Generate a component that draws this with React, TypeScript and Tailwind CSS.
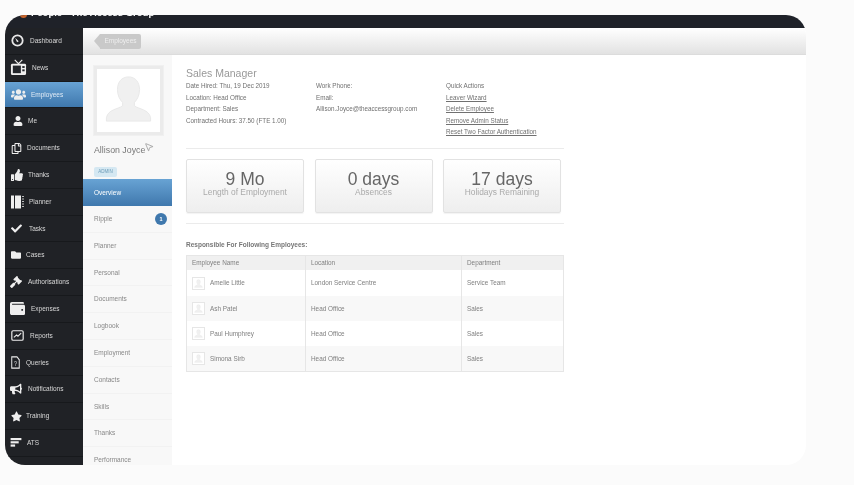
import { MousePointer2 } from "lucide-react";
import {
  FaBullhorn,
  FaCheck,
  FaFolder,
  FaGavel,
  FaRegCopy,
  FaStar,
  FaThumbsUp,
  FaUser,
  FaUsers,
  FaWallet,
} from "react-icons/fa";

function Gauge() {
  return (
    <svg viewBox="0 0 16 16" className="h-[13px] w-[13px]">
      <circle cx="8" cy="8" r="6.4" fill="none" stroke="#e8e8e8" strokeWidth="2.2" />
      <path d="M5 4.5 L9.5 9 L7.5 10 Z" fill="#e8e8e8" />
    </svg>
  );
}

function Tv() {
  return (
    <svg viewBox="0 0 18 18" className="h-[17px] w-[17px]">
      <path d="M5 1 L9 5 L13 1" fill="none" stroke="#eee" strokeWidth="1.2" />
      <rect x="1" y="5" width="16" height="12" rx="1.5" fill="#eee" />
      <rect x="3" y="7" width="8.5" height="8" fill="#22252a" />
      <rect x="13" y="7.5" width="2.5" height="2" fill="#22252a" />
      <rect x="13" y="11" width="2.5" height="2" fill="#22252a" />
    </svg>
  );
}

function PlannerIcon() {
  return (
    <svg viewBox="0 0 13 14" className="h-[14px] w-[13px]">
      <rect x="0" y="0.5" width="3" height="13" fill="#eee" />
      <rect x="4" y="0.5" width="6" height="13" fill="#eee" />
      <path d="M11 1.5 H13 M11 4 H13 M11 6.5 H13 M11 9 H13 M11 11.5 H13" stroke="#bbb" strokeWidth="1.2" />
    </svg>
  );
}

function ReportIcon() {
  return (
    <svg viewBox="0 0 14 12" className="h-[11px] w-[13px]">
      <rect x="0.8" y="0.8" width="12.4" height="10.4" rx="1.5" fill="none" stroke="#eee" strokeWidth="1.3" />
      <path d="M3 8 L6 5.5 L7.5 6.8 L11 3.5" fill="none" stroke="#eee" strokeWidth="1.2" />
    </svg>
  );
}

function QueryIcon() {
  return (
    <svg viewBox="0 0 12 14" className="h-[13px] w-[9px]" preserveAspectRatio="none">
      <path d="M1 1 H8 L11 4 V13 H1 Z" fill="none" stroke="#eee" strokeWidth="1.3" />
      <text x="4" y="10.5" fontSize="7" fill="#eee" fontFamily="Liberation Sans, sans-serif">?</text>
    </svg>
  );
}

function AtsIcon() {
  return (
    <svg viewBox="0 0 12 10" className="h-[9px] w-[12px]">
      <rect x="0" y="0" width="12" height="2.4" fill="#eee" />
      <rect x="0" y="3.6" width="9" height="2.4" fill="#eee" />
      <rect x="0" y="7.2" width="5" height="2.4" fill="#eee" />
    </svg>
  );
}

const ic = "text-[#eeeeee]";

const sideItems = [
  { label: "Dashboard", icon: <Gauge />, slot: "w-[25px] pl-[6px]" },
  { label: "News", icon: <Tv />, slot: "w-[27px] pl-[5px]" },
  { label: "Employees", icon: <FaUsers size={15} className={ic} />, slot: "w-[26px] pl-[6px]", active: true },
  { label: "Me", icon: <FaUser size={10} className={ic} />, slot: "w-[23px] pl-[8px]" },
  { label: "Documents", icon: <FaRegCopy size={11} className={ic} />, slot: "w-[22px] pl-[6px]" },
  { label: "Thanks", icon: <FaThumbsUp size={12} className={ic} />, slot: "w-[23px] pl-[6px]" },
  { label: "Planner", icon: <PlannerIcon />, slot: "w-[24px] pl-[6px]" },
  { label: "Tasks", icon: <FaCheck size={11} className={ic} />, slot: "w-[24px] pl-[6px]" },
  { label: "Cases", icon: <FaFolder size={10} className={ic} />, slot: "w-[21px] pl-[6px]" },
  { label: "Authorisations", icon: <FaGavel size={12} className={ic} />, slot: "w-[23px] pl-[5px]" },
  { label: "Expenses", icon: <FaWallet size={15} className={ic} />, slot: "w-[26px] pl-[5px]" },
  { label: "Reports", icon: <ReportIcon />, slot: "w-[25px] pl-[6px]" },
  { label: "Queries", icon: <QueryIcon />, slot: "w-[21px] pl-[6px]" },
  { label: "Notifications", icon: <FaBullhorn size={12} className={ic} />, slot: "w-[23px] pl-[5px]" },
  { label: "Training", icon: <FaStar size={11} className={ic} />, slot: "w-[21px] pl-[6px]" },
  { label: "ATS", icon: <AtsIcon />, slot: "w-[22px] pl-[5px]" },
];

const subNav = ["Ripple", "Planner", "Personal", "Documents", "Logbook", "Employment", "Contacts", "Skills", "Thanks", "Performance"];

const stats = [
  { big: "9 Mo", small: "Length of Employment" },
  { big: "0 days", small: "Absences" },
  { big: "17 days", small: "Holidays Remaining" },
];

const rows = [
  { name: "Amelie Little", location: "London Service Centre", dept: "Service Team" },
  { name: "Ash Patel", location: "Head Office", dept: "Sales" },
  { name: "Paul Humphrey", location: "Head Office", dept: "Sales" },
  { name: "Simona Sirb", location: "Head Office", dept: "Sales" },
];

function Silhouette({ className }: { className: string }) {
  return (
    <svg viewBox="0 0 60 60" className={className}>
      <path
        d="M30 4 C38 4 43 10 43 19 C43 26 40 31 37 34 L37 38 C42 42 54 42 56 52 L56 56 L4 56 L4 52 C6 42 18 42 23 38 L23 34 C20 31 17 26 17 19 C17 10 22 4 30 4 Z"
        fill="#f0f0f0"
        stroke="#e6e6e6"
      />
    </svg>
  );
}

export default function App() {
  return (
    <div className="h-[485px] w-[854px] overflow-hidden bg-[#fbfbfb] pl-[5px] pt-[15px] font-['Liberation_Sans',Arial,sans-serif]">
      <div className="relative flex h-[450px] w-[801px] flex-col overflow-hidden rounded-[20px] bg-white blur-[0.4px]">
        <div className="flex h-[13px] shrink-0 items-start gap-[4px] overflow-hidden bg-[#1f2229] pl-[15px]">
          <div className="-mt-[2px] h-[5px] w-[7px] rounded-b-full bg-[#c8642a]" />
          <span className="-mt-[8px] text-[9.5px] font-bold leading-[12px] text-white">People - The Access Group</span>
        </div>

        <div className="flex min-h-0 flex-1">
          <nav className="w-[78px] shrink-0 bg-[#202226]">
            {sideItems.map((item) => (
              <div
                key={item.label}
                className={`flex h-[26.8px] items-center border-b border-[#17191c] text-[6.5px] ${
                  item.active
                    ? "bg-gradient-to-b from-[#68a3d4] to-[#3f78ad] text-[#dfeaf5]"
                    : "text-[#d8d8d8]"
                }`}
              >
                <span className={`flex shrink-0 items-center ${item.slot}`}>{item.icon}</span>
                <span>{item.label}</span>
              </div>
            ))}
          </nav>

          <div className="flex min-w-0 flex-1 flex-col">
            <div className="flex h-[27px] shrink-0 items-center border-b border-[#dcdcdc] bg-gradient-to-b from-white to-[#e2e2e2] pl-[11px]">
              <div className="h-0 w-0 border-y-[7.5px] border-r-[6px] border-y-transparent border-r-[#c9c9c9]" />
              <div className="flex h-[15px] w-[41px] items-center justify-center rounded-r-[2px] bg-[#c9c9c9] text-[6.5px] text-[#eeeeee]">
                Employees
              </div>
            </div>

            <div className="flex min-h-0 flex-1">
              <aside className="w-[89px] shrink-0 bg-[#f8f8f8]">
                <div className="h-[124px] pl-[11px] pt-[11px]">
                  <div className="flex h-[69px] w-[69px] items-end justify-center border-[3px] border-[#ebebeb] bg-white px-[6px] pb-[7px] outline outline-1 outline-[#f0f0f0]">
                    <Silhouette className="h-[52px] w-[52px]" />
                  </div>
                  <p className="mt-[9px] text-[8.8px] leading-[12px] text-[#777777]">Allison Joyce</p>
                  <span className="mt-[3px] inline-flex h-[10px] w-[23px] items-center justify-center rounded-[2px] bg-[#d5e8f2] text-[4.5px] text-[#6c9cb8]">
                    ADMIN
                  </span>
                </div>
                <div className="flex h-[27px] items-center bg-gradient-to-b from-[#68a3d4] to-[#3f78ad] pl-[11px] text-[6.5px] text-white">
                  Overview
                </div>
                {subNav.map((label) => (
                  <div
                    key={label}
                    className="flex h-[26.8px] items-center justify-between border-b border-[#f2f2f2] pl-[11px] pr-[5px] text-[6.5px] text-[#888888]"
                  >
                    <span>{label}</span>
                    {label === "Ripple" && (
                      <span className="flex h-[12px] w-[12px] items-center justify-center rounded-full bg-[#3f78ad] text-[5.5px] font-bold text-white">
                        1
                      </span>
                    )}
                  </div>
                ))}
              </aside>

              <main className="ml-[14px] w-[378px] shrink-0 pt-[12px]">
                <h1 className="text-[10.5px] leading-[13px] text-[#999999]">Sales Manager</h1>
                <div className="grid grid-cols-[130px_130px_1fr] text-[6.3px] leading-[11.6px] text-[#707070]">
                  <div>
                    <p>Date Hired: Thu, 19 Dec 2019</p>
                    <p>Location: Head Office</p>
                    <p>Department: Sales</p>
                    <p>Contracted Hours: 37.50 (FTE 1.00)</p>
                  </div>
                  <div>
                    <p>Work Phone:</p>
                    <p>Email:</p>
                    <p>Allison.Joyce@theaccessgroup.com</p>
                  </div>
                  <div>
                    <p>Quick Actions</p>
                    <p className="underline">Leaver Wizard</p>
                    <p className="underline">Delete Employee</p>
                    <p className="underline">Remove Admin Status</p>
                    <p className="underline">Reset Two Factor Authentication</p>
                  </div>
                </div>

                <div className="mt-[10px] border-t border-[#ebebeb]" />

                <div className="mt-[10px] flex gap-[10.5px]">
                  {stats.map((s) => (
                    <div
                      key={s.big}
                      className="flex h-[54px] w-[118px] flex-col items-center rounded-[2px] border border-[#e2e2e2] bg-gradient-to-b from-white to-[#eeeeee] pt-[10px] shadow-[0_1px_1px_rgba(0,0,0,0.05)]"
                    >
                      <span className="text-[17.5px] leading-[18px] text-[#666666]">{s.big}</span>
                      <span className="text-[8.4px] leading-[9px] text-[#aaaaaa]">{s.small}</span>
                    </div>
                  ))}
                </div>

                <div className="mt-[10px] border-t border-[#ebebeb]" />

                <h2 className="mt-[17px] text-[6.5px] font-bold leading-[8px] text-[#777777]">
                  Responsible For Following Employees:
                </h2>

                <table className="mt-[6px] w-full table-fixed border border-[#e6e6e6] text-[6.4px] text-[#808080]">
                  <colgroup>
                    <col className="w-[119px]" />
                    <col className="w-[156px]" />
                    <col />
                  </colgroup>
                  <thead>
                    <tr className="h-[15px] bg-[#f0f0f0] text-left">
                      <th className="border-r border-[#e6e6e6] pl-[5px] font-normal">Employee Name</th>
                      <th className="border-r border-[#e6e6e6] pl-[5px] font-normal">Location</th>
                      <th className="pl-[5px] font-normal">Department</th>
                    </tr>
                  </thead>
                  <tbody>
                    {rows.map((r, i) => (
                      <tr key={r.name} className={`h-[25.25px] ${i % 2 === 1 ? "bg-[#f8f8f8]" : "bg-white"}`}>
                        <td className="border-r border-[#e6e6e6] pl-[5px]">
                          <div className="flex items-center gap-[5px]">
                            <span className="flex h-[13px] w-[13px] items-center justify-center border border-[#e6e6e6] bg-white">
                              <Silhouette className="h-[9px] w-[9px]" />
                            </span>
                            <span>{r.name}</span>
                          </div>
                        </td>
                        <td className="border-r border-[#e6e6e6] pl-[5px]">{r.location}</td>
                        <td className="pl-[5px]">{r.dept}</td>
                      </tr>
                    ))}
                  </tbody>
                </table>
              </main>
            </div>
          </div>
        </div>

        <MousePointer2 size={10} strokeWidth={1.2} className="absolute left-[139px] top-[127px] text-[#666666]" />
      </div>
    </div>
  );
}
